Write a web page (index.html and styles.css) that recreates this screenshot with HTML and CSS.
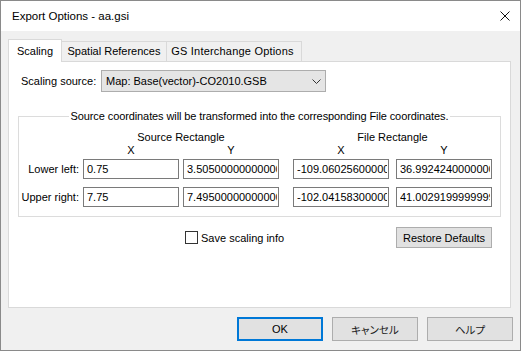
FILE: index.html
```html
<!DOCTYPE html>
<html lang="en">
<head>
    <meta charset="UTF-8">
    <title>Export Options - aa.gsi</title>
    <link rel="stylesheet" href="styles.css">
</head>
<body>
    <div class="window">
        <!-- Title bar -->
        <div class="titlebar">
            <span class="title">Export Options - aa.gsi</span>
            <svg class="close" width="10" height="10" viewBox="0 0 10 10">
                <path d="M0.5 0.5L9.5 9.5M9.5 0.5L0.5 9.5" stroke="#111" stroke-width="1"/>
            </svg>
        </div>

        <div class="client">
            <div class="tabs">
                <div class="tab active">Scaling</div>
                <div class="tab tab-spatial">Spatial References</div>
                <div class="tab tab-gs">GS Interchange Options</div>
            </div>

            <div class="panel">
                <div class="source-row">
                    <span class="source-label">Scaling source:</span>
                    <div class="combo">
                        <span class="combo-text">Map: Base(vector)-CO2010.GSB</span>
                        <svg class="chevron" width="9" height="5" viewBox="0 0 9 5">
                            <path d="M0.5 0.5L4.5 4.5L8.5 0.5" fill="none" stroke="#333" stroke-width="1"/>
                        </svg>
                    </div>
                </div>

                <fieldset class="group">
                    <legend>Source coordinates will be transformed into the corresponding File coordinates.</legend>
                    <div class="coords">
                        <div class="rect-title source-title">Source Rectangle</div>
                        <div class="rect-title file-title">File Rectangle</div>

                        <div class="axis col-sx">X</div>
                        <div class="axis col-sy">Y</div>
                        <div class="axis col-fx">X</div>
                        <div class="axis col-fy">Y</div>

                        <div class="row-label row-ll">Lower left:</div>
                        <input class="field row-ll" value="0.75">
                        <input class="field row-ll" value="3.50500000000000000">
                        <input class="field row-ll" value="-109.060256000000000">
                        <input class="field row-ll" value="36.9924240000000000">

                        <div class="row-label row-ur">Upper right:</div>
                        <input class="field row-ur" value="7.75">
                        <input class="field row-ur" value="7.49500000000000000">
                        <input class="field row-ur" value="-102.041583000000000">
                        <input class="field row-ur" value="41.0029199999999990">
                    </div>
                </fieldset>

                <div class="options-row">
                    <label class="check"><span class="check-box"></span>Save scaling info</label>
                    <button class="btn restore">Restore Defaults</button>
                </div>
            </div>

            <div class="buttons">
                <button class="btn dlg default">OK</button>
                <button class="btn dlg jp">キャンセル</button>
                <button class="btn dlg jp">ヘルプ</button>
            </div>
        </div>
    </div>
</body>
</html>
```

FILE: styles.css
```css
body {
    margin: 0;
    font-family: "Liberation Sans", "Noto Sans CJK JP", sans-serif;
    font-size: 11px;
    color: #000;
}

.window {
    width: 521px;
    height: 351px;
    box-sizing: border-box;
    border: 1px solid #8a8a8a;
    background-color: #f0f0f0;
    display: flex;
    flex-direction: column;
}

/* Title bar */
.titlebar {
    height: 30px;
    background-color: #fff;
    display: flex;
    align-items: center;
    padding: 0 10px 0 11px;
}

.title {
    flex: 1;
    font-size: 11.5px;
}

.close {
    display: block;
    margin-top: -1px;
}

.client {
    flex: 1;
    padding: 8px 9px 0 7px;
}

/* Tabs */
.tabs {
    display: flex;
    align-items: flex-end;
    height: 22px;
}

.tab {
    box-sizing: border-box;
    height: 20px;
    line-height: 19px;
    text-align: center;
    border-top: 1px solid #d9d9d9;
    border-right: 1px solid #d9d9d9;
    background-color: #f0f0f0;
    white-space: nowrap;
}

.tab.active {
    width: 54px;
    height: 23px;
    line-height: 22px;
    margin-bottom: -1px;
    border-left: 1px solid #d9d9d9;
    background-color: #fff;
    position: relative;
    z-index: 1;
}

.tab-spatial {
    width: 105px;
}

.tab-gs {
    width: 135px;
    padding-right: 3px;
    letter-spacing: 0.2px;
}

.panel {
    box-sizing: border-box;
    height: 247px;
    border: 1px solid #d9d9d9;
    background-color: #fff;
    padding-top: 8px;
}

/* Scaling source */
.source-row {
    display: flex;
    align-items: center;
    height: 22px;
    padding-left: 12px;
}

.source-label {
    width: 80px;
}

.combo {
    box-sizing: border-box;
    width: 225px;
    height: 22px;
    border: 1px solid #adadad;
    background-color: #e5e5e5;
    display: flex;
    align-items: center;
    padding: 0 4px 0 4px;
}

.combo-text {
    flex: 1;
}

.chevron {
    display: block;
}

/* Group box */
.group {
    margin: 17px 9px 0 9px;
    padding: 8px 0 9px 0;
    border: 1px solid #dcdcdc;
    min-width: 0;
}

.group legend {
    margin: 0 auto;
    padding: 0 2px;
    line-height: 14px;
    letter-spacing: -0.1px;
}

.coords {
    display: grid;
    grid-template-columns: 64px 100px 110px 103px 96px;
    grid-template-rows: 13px 13px 22px 28px;
}

.rect-title {
    grid-row: 1;
    line-height: 13px;
    text-align: center;
}

.source-title {
    grid-column: 2 / 4;
    padding-right: 14px;
}

.file-title {
    grid-column: 4 / 6;
}

.axis {
    grid-row: 2;
    width: 96px;
    line-height: 13px;
    text-align: center;
}

.col-sx { grid-column: 2; }
.col-sy { grid-column: 3; }
.col-fx { grid-column: 4; }
.col-fy { grid-column: 5; }

.row-ll { grid-row: 3; }
.row-ur { grid-row: 4; }

.row-label {
    grid-column: 1;
    align-self: end;
    line-height: 20px;
    text-align: right;
    padding-right: 4px;
    white-space: nowrap;
}

.field {
    align-self: end;
    box-sizing: border-box;
    width: 96px;
    height: 20px;
    margin: 0;
    padding: 0 1px 0 3px;
    border: 1px solid #7a7a7a;
    font-family: "Liberation Sans", sans-serif;
    font-size: 11px;
    color: #000;
    background-color: #fff;
    outline: none;
}

/* Checkbox and restore button */
.options-row {
    display: flex;
    align-items: center;
    margin-top: 10px;
    padding-left: 176px;
}

.check {
    display: flex;
    align-items: center;
    gap: 3px;
}

.check-box {
    box-sizing: border-box;
    width: 13px;
    height: 13px;
    border: 1px solid #333;
    background-color: #fff;
}

.btn {
    box-sizing: border-box;
    margin: 0;
    padding: 0;
    border: 1px solid #adadad;
    background-color: #e1e1e1;
    font-family: "Liberation Sans", "Noto Sans CJK JP", sans-serif;
    font-size: 11px;
    color: #000;
}

.restore {
    width: 96px;
    height: 21px;
    margin-left: auto;
    margin-right: 18px;
}

/* Dialog buttons */
.buttons {
    display: flex;
    justify-content: flex-end;
    gap: 9px;
    margin-top: 9px;
    margin-right: -2px;
}

.dlg {
    width: 86px;
    height: 24px;
}

.default {
    border: 2px solid #0078d7;
}

.jp {
    font-size: 10.5px;
    font-feature-settings: "palt";
    color: #1a1a1a;
}
```
